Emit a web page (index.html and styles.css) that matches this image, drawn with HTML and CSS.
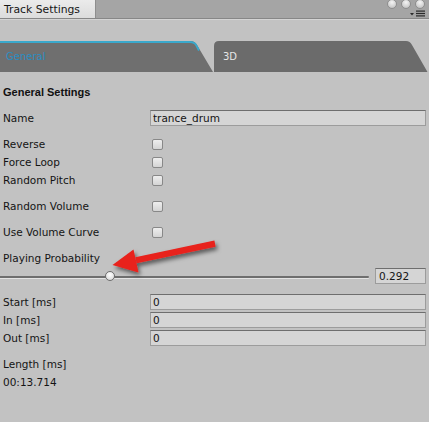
FILE: index.html
```html
<!DOCTYPE html>
<html>
<head>
<meta charset="utf-8">
<title>Track Settings</title>
<link rel="stylesheet" href="styles.css">
</head>
<body>
<div class="window">
  <div class="titlebar">
    <div class="wintab">Track Settings</div>
    <div class="winctl">
      <div class="lights"><span></span><span></span><span></span></div>
      <svg class="menu-icon" width="15" height="7" viewBox="0 0 15 7">
        <path d="M0 3 H4 L2 5.5 Z" fill="#2a2a2a"/>
        <rect x="6" y="0.5" width="9" height="1.2" fill="#2a2a2a"/>
        <rect x="6" y="2.9" width="9" height="1.2" fill="#2a2a2a"/>
        <rect x="6" y="5.3" width="9" height="1.2" fill="#2a2a2a"/>
      </svg>
    </div>
  </div>
  <div class="titlebar-edge"></div>

  <div class="tabs">
    <div class="tab tab-active">
      <svg class="tab-shape" width="214" height="31" viewBox="0 0 214 31">
        <path d="M0 0 H190 Q195 0 197 4 L213 31 H0 Z" fill="#6f6f6f"/>
        <path d="M0 1 H190 Q194.5 1 196.3 4.4 L199 9.5" fill="none" stroke="#3aa8cb" stroke-width="2"/>
      </svg>
      <span class="tab-label">General</span>
    </div>
    <div class="tab">
      <svg class="tab-shape" width="215" height="31" viewBox="0 0 215 31">
        <path d="M0 31 V5 Q0 0 5 0 H192 Q196 0 198 4 L213.5 31 Z" fill="#6b6b6b"/>
      </svg>
      <span class="tab-label">3D</span>
    </div>
  </div>

  <div class="panel">
    <div class="group">
      <div class="row heading">General Settings</div>
    </div>
    <div class="group">
      <div class="row"><span class="label">Name</span><div class="field">trance_drum</div></div>
    </div>
    <div class="group">
      <div class="row"><span class="label">Reverse</span><span class="check"></span></div>
      <div class="row"><span class="label">Force Loop</span><span class="check"></span></div>
      <div class="row"><span class="label">Random Pitch</span><span class="check"></span></div>
    </div>
    <div class="group">
      <div class="row"><span class="label">Random Volume</span><span class="check"></span></div>
    </div>
    <div class="group">
      <div class="row"><span class="label">Use Volume Curve</span><span class="check"></span></div>
    </div>
    <div class="group">
      <div class="row"><span class="label">Playing Probability</span></div>
      <div class="row slider-row">
        <div class="slider" style="--v:0.292">
          <div class="slider-track"></div>
          <div class="slider-thumb"></div>
        </div>
        <div class="field value">0.292</div>
      </div>
    </div>
    <div class="group">
      <div class="row"><span class="label">Start [ms]</span><div class="field">0</div></div>
      <div class="row"><span class="label">In [ms]</span><div class="field">0</div></div>
      <div class="row"><span class="label">Out [ms]</span><div class="field">0</div></div>
    </div>
    <div class="group">
      <div class="row"><span class="label">Length [ms]</span></div>
      <div class="row"><span class="label">00:13.714</span></div>
    </div>
  </div>

  <!-- red callout pointing at the slider thumb -->
  <svg class="callout" width="429" height="422" viewBox="0 0 429 422">
    <defs>
      <filter id="arrow-shadow" x="-20%" y="-40%" width="140%" height="180%">
        <feDropShadow dx="2" dy="3" stdDeviation="2.2" flood-color="#000" flood-opacity="0.55"/>
      </filter>
    </defs>
    <g filter="url(#arrow-shadow)" fill="#e8201b">
      <polygon points="135.4,257.3 214.4,240.6 215.6,246.8 136.6,263.3"/>
      <polygon points="112.5,265 133.5,249.5 138.5,272.5"/>
    </g>
  </svg>
</div>
</body>
</html>
```

FILE: styles.css
```css
html, body {
  margin: 0;
  padding: 0;
}

body {
  background: #c2c2c2;
  font-family: "DejaVu Sans", sans-serif;
  font-size: 10.5px;
  color: #141414;
}

.window {
  position: relative;
  width: 429px;
  height: 422px;
  overflow: hidden;
  background: #c2c2c2;
}

/* window title strip */
.titlebar {
  display: flex;
  height: 18px;
  background: #a5a5a5;
  border-bottom: 1px solid #878787;
}

.wintab {
  width: 91px;
  padding-left: 4px;
  line-height: 19px;
  font-size: 10.8px;
  color: #161616;
  background: linear-gradient(#ebebeb, #dcdcdc);
  border-right: 1px solid #8e8e8e;
}

.winctl {
  margin-left: auto;
  width: 44px;
  display: flex;
  flex-direction: column;
  align-items: flex-end;
  padding-right: 4px;
}

.lights {
  display: flex;
  gap: 4px;
  margin-top: -1px;
}

.lights span {
  width: 10px;
  height: 10px;
  border-radius: 50%;
  box-sizing: border-box;
  border: 1px solid #8e8e8e;
  background: radial-gradient(circle at 50% 30%, #f4f4f4, #d2d2d2 60%, #b4b4b4);
}

.menu-icon {
  display: block;
  margin-top: 1px;
}

.titlebar-edge {
  height: 1px;
  background: #d4d4d4;
}

/* section tabs */
.tabs {
  display: flex;
  height: 31px;
  margin-top: 21px;
}

.tab {
  position: relative;
  width: 214px;
  height: 31px;
}

.tab + .tab {
  width: 215px;
}

.tab-shape {
  position: absolute;
  left: 0;
  top: 0;
}

.tab-label {
  position: relative;
  display: block;
  line-height: 31px;
  font-size: 10px;
  padding-left: 6px;
  color: #e6e6e6;
}

.tab + .tab .tab-label {
  padding-left: 9px;
}

.tab-active .tab-label {
  color: #2a8dc2;
}

/* inspector body */
.panel {
  display: flex;
  flex-direction: column;
  gap: 8px;
  padding: 11px 3px 0 3px;
}

.row {
  display: flex;
  align-items: center;
  height: 18px;
}

.heading {
  font-family: "Liberation Sans", Arial, sans-serif;
  font-weight: bold;
  font-size: 11px;
  color: #111;
}

.label {
  width: 147px;
  flex: none;
  white-space: nowrap;
}

.field {
  flex: 1;
  height: 14px;
  line-height: 14px;
  padding-left: 2px;
  background: #d5d5d5;
  border: 1px solid #9c9c9c;
  border-top-color: #6e6e6e;
  color: #141414;
  white-space: nowrap;
}

.check {
  width: 9px;
  height: 9px;
  margin-left: 2px;
  border: 1px solid #888;
  border-radius: 2px;
  background: linear-gradient(#eeeeee, #d4d4d4);
}

/* probability slider */
.slider-row {
  margin-left: -3px;
}

.slider {
  position: relative;
  flex: 1;
  height: 18px;
  display: flex;
  align-items: center;
}

.slider-track {
  width: 100%;
  height: 2px;
  background: #6e6e6e;
  border-radius: 0 2px 2px 0;
  box-shadow: 0 1px 0 #e3e3e3;
  margin-top: 1px;
}

.slider-thumb {
  position: absolute;
  top: 4px;
  left: calc(var(--v) * (100% - 10px));
  width: 8px;
  height: 8px;
  border-radius: 50%;
  border: 1px solid #6d6d6d;
  background: radial-gradient(circle at 50% 35%, #ffffff, #e4e4e4 60%, #c9c9c9);
}

.field.value {
  flex: none;
  width: 46px;
  margin-left: 6px;
  padding-left: 3px;
}

.callout {
  position: absolute;
  left: 0;
  top: 0;
  pointer-events: none;
}
```
